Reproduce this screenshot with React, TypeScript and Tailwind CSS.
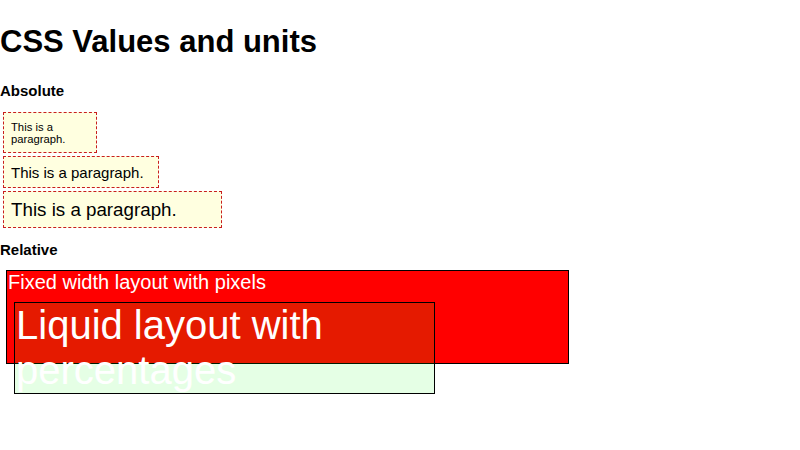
export default function App() {
  return (
    <div className="min-h-[450px] bg-white font-['Liberation_Sans',Arial,sans-serif] leading-[normal] text-black">
      <h1 className="pt-[24px] text-[31px] font-bold leading-[normal]">CSS Values and units</h1>

      <h2 className="mt-[22px] text-[15px] font-bold leading-[normal]">Absolute</h2>
      <div className="mt-[13px] flex flex-col gap-[3px] pl-[3px]">
        <p className="w-[94px] border border-dashed border-[#c81e1e] bg-[#ffffe0] px-[7px] py-[7.5px] text-[11.25px]">
          This is a paragraph.
        </p>
        <p className="w-[156px] border border-dashed border-[#c81e1e] bg-[#ffffe0] px-[7px] py-[6.5px] text-[15px]">
          This is a paragraph.
        </p>
        <p className="w-[219px] border border-dashed border-[#c81e1e] bg-[#ffffe0] px-[7px] py-[6.5px] text-[18.75px]">
          This is a paragraph.
        </p>
      </div>

      <h2 className="mt-[13px] text-[15px] font-bold leading-[normal]">Relative</h2>
      <div className="mt-[11.5px] ml-[6px] h-[94px] w-[563px] border border-black bg-[#ff0000] text-white">
        <div className="pl-[1px] text-[20px] leading-[normal]">Fixed width layout with pixels</div>
        <div className="mt-[8.5px] ml-[7px] w-[421px] border border-black bg-[rgba(0,255,0,0.1)] pl-[1px] text-[40px] leading-[normal]">
          Liquid layout with percentages
        </div>
      </div>
    </div>
  )
}
